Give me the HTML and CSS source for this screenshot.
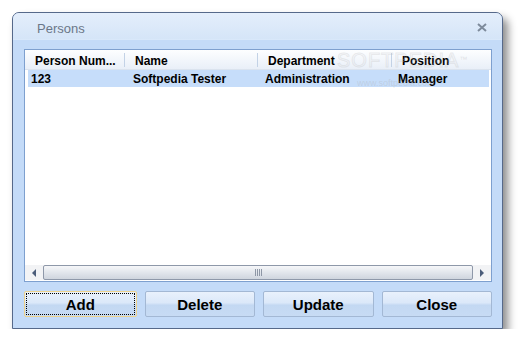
FILE: index.html
```html
<!DOCTYPE html>
<html lang="en">
<head>
<meta charset="UTF-8">
<title>Persons</title>
<link rel="stylesheet" href="styles.css">
</head>
<body>
<div class="window">
    <div class="titlebar">
        <span class="title">Persons</span>
        <svg class="close-x" width="10" height="9" viewBox="0 0 10 9">
            <path d="M1 1 L9 8 M9 1 L1 8" stroke="#7e8b9c" stroke-width="2" fill="none"/>
        </svg>
    </div>
    <div class="content">
        <div class="grid">
            <div class="head">
                <div class="hcell c1">Person Num...</div>
                <div class="hcell c2">Name</div>
                <div class="hcell c3">Department</div>
                <div class="hcell c4">Position</div>
            </div>
            <div class="row selected">
                <div class="cell c1">123</div>
                <div class="cell c2">Softpedia Tester</div>
                <div class="cell c3">Administration</div>
                <div class="cell c4">Manager</div>
            </div>
            <div class="filler"></div>
            <div class="hscroll">
                <div class="arrow left"></div>
                <div class="track">
                    <div class="thumb"><span class="grip"></span></div>
                </div>
                <div class="arrow right"></div>
            </div>
            <!-- watermark from the capture -->
            <div class="mark">SOFTPEDIA<span class="tm">™</span></div>
            <div class="mark-url">www.softpedia.com</div>
        </div>
        <div class="buttons">
            <div class="btn focus"><span>Add</span></div>
            <div class="btn"><span>Delete</span></div>
            <div class="btn"><span>Update</span></div>
            <div class="btn"><span>Close</span></div>
        </div>
    </div>
</div>
</body>
</html>
```

FILE: styles.css
```css
body{margin:0; background:#fff; font-family:"Liberation Sans", Arial, sans-serif;}
.window{width:489px; height:315px; margin:12px 0 0 12px; border:1px solid #56698a; border-radius:7px 7px 0 0; background:#c4dbf8; box-shadow:5px 6px 9px rgba(0,0,0,0.45); display:flex; flex-direction:column;}
.titlebar{height:27px; box-sizing:border-box; padding:4px 15px 0 24px; border-bottom:1px solid #d9e8fa; border-radius:6px 6px 0 0; background:linear-gradient(#e4eefb, #d5e5f8); display:flex; align-items:center; justify-content:space-between;}
.title{font-size:13px; color:#6b7788;}
.close-x{margin-top:-1px;}
.content{padding:9px 10px 10px 11px; display:flex; flex-direction:column;}
.grid{position:relative; height:231px; border:1px solid #7ea0cf; background:#fff; display:flex; flex-direction:column; overflow:hidden;}
.head{display:flex; height:19px; background:linear-gradient(#fdfeff, #e9eff8); border-bottom:1px solid #dbe3ee;}
.hcell{font-size:12px; font-weight:bold; padding:1px 0 0 10px; box-sizing:border-box; height:19px; line-height:21px; white-space:nowrap; background:linear-gradient(#c3d2e6, #c3d2e6) right 3px / 1px 14px no-repeat;}
.c1{width:100px;}
.c2{width:133px;}
.c3{width:134px;}
.c4{flex:1; background:none;}
.row{display:flex; height:17px; margin:0 2px 0 3px;}
.row.selected{background:#c6ddfa;}
.cell{font-size:12px; font-weight:bold; line-height:19px; padding-left:7px; box-sizing:border-box; white-space:nowrap;}
.row .c1{width:97px; padding-left:3px;}
.row .c2{padding-left:8px;}
.row .c4{padding-left:6px;}
.filler{flex:1;}
.hscroll{height:15px; margin:0 0 1px 0; background:#f2f3f5; display:flex; align-items:center;}
.arrow{width:18px; display:flex; justify-content:center;}
.arrow.left:before{content:""; border-style:solid; border-width:4px 4px 4px 0; border-color:transparent #4b5d7a transparent transparent;}
.arrow.right:before{content:""; border-style:solid; border-width:4px 0 4px 4px; border-color:transparent transparent transparent #4b5d7a;}
.track{flex:1; height:15px;}
.thumb{height:13px; border:1px solid #8e98a9; border-radius:2px; background:linear-gradient(#f6f7f9, #e2e6ec 50%, #cfd5de); display:flex; align-items:center; justify-content:center;}
.grip{width:7px; height:7px; background:repeating-linear-gradient(90deg, #8e97a6 0 1px, transparent 1px 2px);}
.mark{position:absolute; left:312px; top:0; font-size:20px; line-height:20px; letter-spacing:1px; color:transparent; -webkit-text-stroke:1px rgba(190,190,190,0.3);}
.tm{font-size:8px; vertical-align:top; -webkit-text-stroke:0; color:rgba(180,180,180,0.35);}
.mark-url{position:absolute; left:332px; top:28px; font-size:9px; color:rgba(170,170,170,0.3);}
.buttons{display:flex; gap:8px; margin-top:9px;}
.btn{flex:1; height:26px; box-sizing:border-box; border:1px solid #a3b8d4; border-radius:2px; background:linear-gradient(#e9f1fc, #dbe8f9 45%, #c3d8f2 55%, #c7dbf4); display:flex; align-items:center; justify-content:center; font-size:15px; font-weight:bold; color:#000;}
.btn.focus{border-color:#eed38e; padding:1px;}
.btn.focus span{flex:1; align-self:stretch; display:flex; align-items:center; justify-content:center; border:1px dotted #000;}
```
